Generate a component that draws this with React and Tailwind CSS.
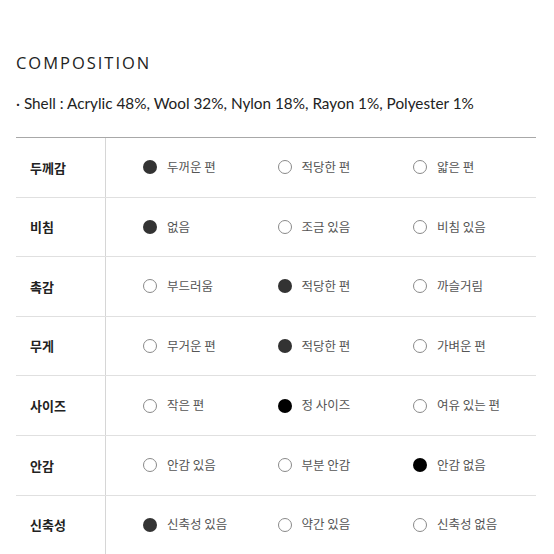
const rows = [
  { label: "두께감", options: ["두꺼운 편", "적당한 편", "얇은 편"], checked: 0, tone: "dark" },
  { label: "비침", options: ["없음", "조금 있음", "비침 있음"], checked: 0, tone: "dark" },
  { label: "촉감", options: ["부드러움", "적당한 편", "까슬거림"], checked: 1, tone: "dark" },
  { label: "무게", options: ["무거운 편", "적당한 편", "가벼운 편"], checked: 1, tone: "dark" },
  { label: "사이즈", options: ["작은 편", "정 사이즈", "여유 있는 편"], checked: 1, tone: "black" },
  { label: "안감", options: ["안감 있음", "부분 안감", "안감 없음"], checked: 2, tone: "black" },
  { label: "신축성", options: ["신축성 있음", "약간 있음", "신축성 없음"], checked: 0, tone: "dark" },
];

const Dot = ({ on, tone }) =>
  on ? (
    <span
      className={`w-[14px] h-[14px] rounded-full shrink-0 ${
        tone === "black" ? "bg-black" : "bg-[#333333]"
      }`}
    />
  ) : (
    <span className="w-[14px] h-[14px] rounded-full shrink-0 border border-[#8a8a8a] bg-white" />
  );

const App = () => {
  return (
    <div className="w-[554px] h-[554px] bg-white overflow-hidden">
      <div className="pl-[16px] pr-[18px] pt-[53px]">
        <h2
          className="text-[16.5px] leading-[20px] tracking-[0.12em] text-[#222]"
          style={{ fontFamily: "'Open Sans', sans-serif" }}
        >
          COMPOSITION
        </h2>
        <p
          className="mt-[20px] text-[15.3px] leading-[20px] text-[#222]"
          style={{ fontFamily: "Lato, sans-serif" }}
        >
          · Shell : Acrylic 48%, Wool 32%, Nylon 18%, Rayon 1%, Polyester 1%
        </p>

        <div
          className="mt-[24px] border-t border-[#a8a8a8]"
          style={{ fontFamily: "'Noto Sans CJK KR', sans-serif" }}
        >
          {rows.map((row) => (
            <div
              key={row.label}
              className="flex h-[59.6px] border-b border-[#e0e0e0]"
            >
              <div className="w-[90px] shrink-0 border-r border-[#d6d6d6] pl-[14px] flex items-center text-[13px] font-bold text-[#222]">
                {row.label}
              </div>
              <div className="flex flex-1">
                {row.options.map((opt, i) => (
                  <div
                    key={opt}
                    className={`w-[135.5px] flex items-center gap-[10px] ${
                      i === 0 ? "pl-[37px]" : "pl-[36px]"
                    }`}
                  >
                    <Dot on={row.checked === i} tone={row.tone} />
                    <span className="text-[12.5px] text-[#555]">{opt}</span>
                  </div>
                ))}
              </div>
            </div>
          ))}
        </div>
      </div>
    </div>
  );
};

export default App;
